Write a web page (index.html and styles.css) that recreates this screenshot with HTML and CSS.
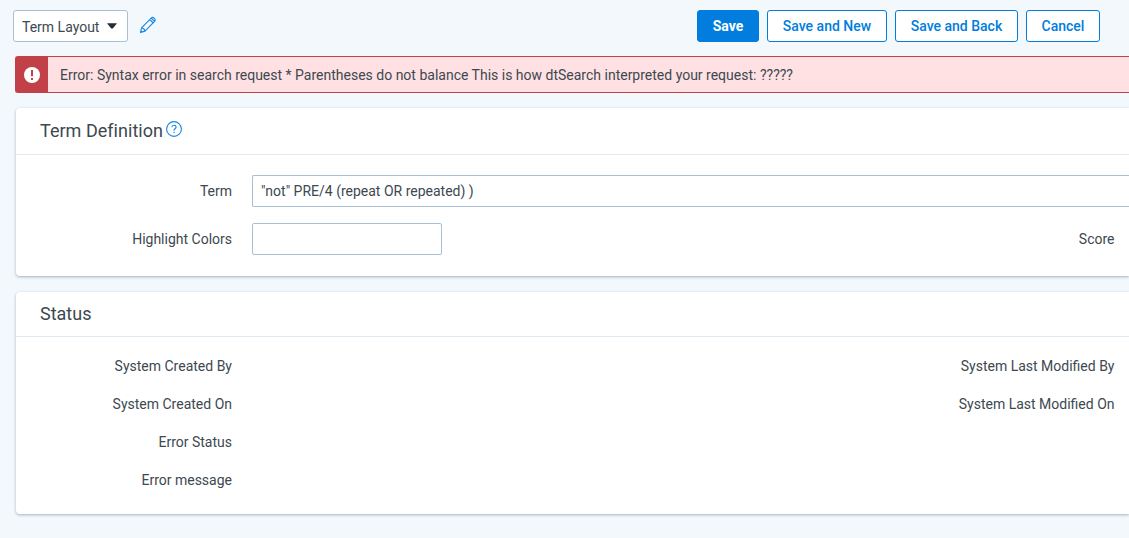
FILE: index.html
```html
<!DOCTYPE html>
<html lang="en">
<head>
<meta charset="utf-8">
<title>Term Layout</title>
<link rel="stylesheet" href="styles.css">
</head>
<body>
<header class="toolbar">
  <button class="layout-select"><span>Term Layout</span>
    <svg width="10" height="6" viewBox="0 0 10 6"><path d="M0 .3h10L6 5.2q-1 .9-2 0z" fill="#252f36"/></svg>
  </button>
  <svg class="edit" width="18" height="18" viewBox="0 0 18 18" fill="none" stroke="#1687e0" stroke-width="1.1" stroke-linejoin="round"><path d="M1.5 16.4l1.2-4.7L12.2 2.1q1.5-1.4 3.1.2t.3 3.1L6 15.1zM2.7 11.7q2.6.4 3.3 3.4M10.8 3.6l3.4 3.4M12.2 2.1l3.4 3.3"/><path d="M1.4 16.6l.6-2.2 1.6 1.6z" fill="#1687e0" stroke="none"/></svg>
  <div class="actions">
    <button class="btn primary">Save</button>
    <button class="btn new">Save and New</button>
    <button class="btn back">Save and Back</button>
    <button class="btn cancel">Cancel</button>
  </div>
</header>
<main>
  <div class="alert">
    <div class="alert-icon"><svg width="16" height="16" viewBox="0 0 16 16"><circle cx="8" cy="8" r="8" fill="#fff"/><path d="M7 3h2v6.3H7zM7 10.9h2V13H7z" fill="#c24047"/></svg></div>
    <p class="alert-text">Error: Syntax error in search request * Parentheses do not balance This is how dtSearch interpreted your request: ?????</p>
  </div>
  <section class="card">
    <h2 class="title definition"><span>Term Definition</span>
      <svg class="help" width="16" height="16" viewBox="0 0 16 16" fill="none" stroke="#1687e0"><circle cx="8" cy="8" r="7.4" stroke-width="1.1"/><path d="M5.9 6.3Q6 4.3 8 4.3t2.1 1.8Q10.1 7 9 7.8T8 9.6" stroke-width="1.1"/><path d="M8 10.7v1.3" stroke-width="1.2"/></svg>
    </h2>
    <div class="fields inputs">
      <label class="label">Term</label>
      <div class="input wide">"not" PRE/4 (repeat OR repeated) )</div>
      <label class="label">Highlight Colors</label>
      <div class="input"></div>
      <label class="label end">Score</label>
    </div>
  </section>
  <section class="card">
    <h2 class="title"><span>Status</span></h2>
    <div class="fields status">
      <span class="label">System Created By</span><span></span><span class="label end">System Last Modified By</span>
      <span class="label">System Created On</span><span></span><span class="label end">System Last Modified On</span>
      <span class="label">Error Status</span><span></span><span></span>
      <span class="label">Error message</span>
    </div>
  </section>
</main>
</body>
</html>
```
FILE: styles.css
```css
* { box-sizing: border-box; }
body { margin: 0; height: 538px; overflow: hidden; background: #f3f8fc; color: #3d4850; font: 14px/20px Roboto, sans-serif; }
button { font: inherit; margin: 0; padding: 0; }
svg { display: block; flex: none; }
.toolbar { display: flex; height: 56px; padding: 10px 29px 0 13px; }
.layout-select { width: 115px; height: 32px; display: flex; align-items: center; justify-content: space-between; padding: 2px 10px 0 8px; border: 1px solid #a7c0d6; border-radius: 3px; background: #fff; color: #3d4850; white-space: nowrap; }
.layout-select svg { margin-bottom: 2px; }
.edit { margin: 6px 0 0 11px; }
.actions { display: flex; gap: 8px; margin-left: auto; }
.btn { height: 32px; border: 1px solid #007ddd; border-radius: 3px; background: #fff; color: #007ddd; font-weight: 500; white-space: nowrap; }
.primary { width: 62px; background: #007ddd; color: #fff; font-weight: 700; }
.new { width: 120px; }
.back { width: 123px; }
.cancel { width: 74px; }
main { padding-left: 15px; }
.alert { display: flex; height: 37px; border: 1px solid #c24047; border-right: 0; border-radius: 3px 0 0 3px; background: #ffe1e3; }
.alert-icon { width: 32px; display: grid; place-items: center; background: #c24047; }
.alert-text { margin: 0; padding: 8px 0 0 12px; white-space: nowrap; }
.card { margin: 15px 0 0 1px; background: #fff; border-radius: 4px 0 0 4px; box-shadow: 0 1px 3px rgba(65, 95, 115, .45); }
.card + .card { margin-top: 16px; }
.title { display: flex; margin: 0; height: 45px; padding: 10px 24px 0; border-bottom: 1px solid #dfeaf2; font-size: 18px; line-height: 24px; font-weight: 400; }
.definition { height: 47px; padding-top: 11px; letter-spacing: .03px; }
.help { margin: 2px 0 0 3.4px; }
.fields { display: grid; grid-template-columns: 216px 190px 1fr; align-items: center; column-gap: 20px; }
.inputs { height: 121px; grid-template-rows: 32px 32px; row-gap: 16px; padding-top: 20px; }
.status { height: 177px; grid-auto-rows: 38px; align-content: start; padding-top: 10px; }
.label { text-align: right; }
.end { padding-right: 14.5px; }
.input { height: 32px; border: 1px solid #a7c0d6; border-radius: 2px; padding: 5px 8px; }
.wide { grid-column: 2 / 4; border-right: 0; border-radius: 2px 0 0 2px; }
```
